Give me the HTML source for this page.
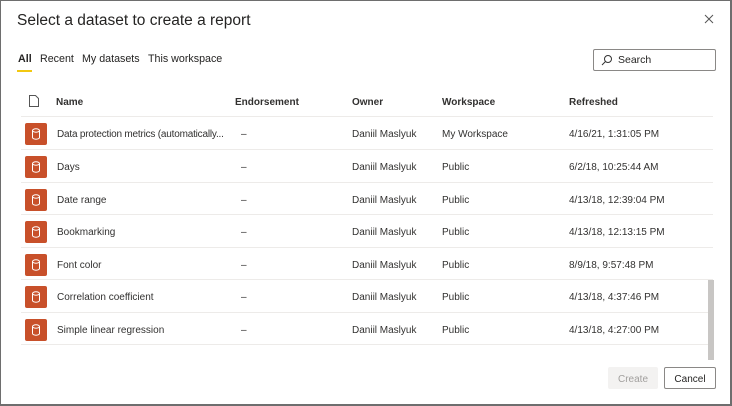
<!DOCTYPE html>
<html><head><style>
*{margin:0;padding:0;box-sizing:border-box}
body{width:732px;height:406px;background:#fff;font-family:"Liberation Sans",sans-serif;color:#252423;position:relative;overflow:hidden}
.frame{position:absolute;left:0;top:0;width:732px;height:406px;border:1px solid #6e6e6e;border-right-width:2px;border-bottom-width:2px}
.title{position:absolute;left:17px;top:12px;font-size:15.5px;color:#252423}
.close{position:absolute;left:704px;top:14px}
.tabs{position:absolute;top:53px;left:18px;font-size:10.7px;color:#252423}
.tabs span{position:absolute;white-space:nowrap}
.ul{position:absolute;left:17px;top:70px;width:15px;height:2px;background:#f2c811}
.search{position:absolute;left:593px;top:49px;width:123px;height:22px;border:1px solid #8a8886;border-radius:2px;font-size:10.5px}
.search span{position:absolute;left:24px;top:4px}
.hdr{position:absolute;top:97px;font-size:10px;font-weight:bold;color:#323130}
.row{position:absolute;left:21px;width:692px;height:33px;border-top:1px solid #edebe9;font-size:10px;color:#323130}
.row span{position:absolute;top:12px;white-space:nowrap}
.ic{position:absolute;left:4px;top:6px;width:22px;height:22px;background:#c8502a;border-radius:2px}
.ic svg{position:absolute;left:6px;top:5px}
.sb{position:absolute;left:708px;top:280px;width:6px;height:80px;background:#c8c6c4}
.btn{position:absolute;top:367px;height:22px;font-size:10px;text-align:center;border-radius:2px}
.btn span{position:absolute;left:0;right:0;top:7px}
</style></head><body>
<div class="frame"></div>
<div class="title">Select a dataset to create a report</div>
<svg class="close" width="10" height="10" viewBox="0 0 10 10"><path d="M1 1L9 9M9 1L1 9" stroke="#555" stroke-width="1"/></svg>
<div class="tabs"><span style="left:0;font-weight:bold">All</span><span style="left:22px">Recent</span><span style="left:64px">My datasets</span><span style="left:130px">This workspace</span></div>
<div class="ul"></div>
<div class="search"><svg style="position:absolute;left:7px;top:4px" width="12" height="12" viewBox="0 0 12 12"><circle cx="7" cy="5" r="3.5" fill="none" stroke="#333"/><path d="M4.5 7.5L1 11" stroke="#333"/></svg><span>Search</span></div>
<svg style="position:absolute;left:29px;top:95px" width="10" height="12" viewBox="0 0 10 12"><path d="M0.5 0.5H6.5L9.5 3.5V11.5H0.5Z" fill="none" stroke="#555"/></svg>
<div class="hdr" style="left:56px">Name</div>
<div class="hdr" style="left:235px">Endorsement</div>
<div class="hdr" style="left:352px">Owner</div>
<div class="hdr" style="left:442px">Workspace</div>
<div class="hdr" style="left:569px">Refreshed</div>
<div class="row" style="top:116px"><div class="ic"><svg width="10" height="12" viewBox="0 0 10 12"><ellipse cx="5" cy="2.5" rx="3.5" ry="1.7" fill="none" stroke="#fff"/><path d="M1.5 2.5V9.5A3.5 1.7 0 0 0 8.5 9.5V2.5" fill="none" stroke="#fff"/></svg></div><span style="left:36px;letter-spacing:-0.2px">Data protection metrics (automatically...</span><span style="left:220px">–</span><span style="left:331px">Daniil Maslyuk</span><span style="left:421px">My Workspace</span><span style="left:548px">4/16/21, 1:31:05 PM</span></div>
<div class="row" style="top:149px"><div class="ic"><svg width="10" height="12" viewBox="0 0 10 12"><ellipse cx="5" cy="2.5" rx="3.5" ry="1.7" fill="none" stroke="#fff"/><path d="M1.5 2.5V9.5A3.5 1.7 0 0 0 8.5 9.5V2.5" fill="none" stroke="#fff"/></svg></div><span style="left:36px">Days</span><span style="left:220px">–</span><span style="left:331px">Daniil Maslyuk</span><span style="left:421px">Public</span><span style="left:548px">6/2/18, 10:25:44 AM</span></div>
<div class="row" style="top:182px"><div class="ic"><svg width="10" height="12" viewBox="0 0 10 12"><ellipse cx="5" cy="2.5" rx="3.5" ry="1.7" fill="none" stroke="#fff"/><path d="M1.5 2.5V9.5A3.5 1.7 0 0 0 8.5 9.5V2.5" fill="none" stroke="#fff"/></svg></div><span style="left:36px">Date range</span><span style="left:220px">–</span><span style="left:331px">Daniil Maslyuk</span><span style="left:421px">Public</span><span style="left:548px">4/13/18, 12:39:04 PM</span></div>
<div class="row" style="top:214px"><div class="ic"><svg width="10" height="12" viewBox="0 0 10 12"><ellipse cx="5" cy="2.5" rx="3.5" ry="1.7" fill="none" stroke="#fff"/><path d="M1.5 2.5V9.5A3.5 1.7 0 0 0 8.5 9.5V2.5" fill="none" stroke="#fff"/></svg></div><span style="left:36px">Bookmarking</span><span style="left:220px">–</span><span style="left:331px">Daniil Maslyuk</span><span style="left:421px">Public</span><span style="left:548px">4/13/18, 12:13:15 PM</span></div>
<div class="row" style="top:247px"><div class="ic"><svg width="10" height="12" viewBox="0 0 10 12"><ellipse cx="5" cy="2.5" rx="3.5" ry="1.7" fill="none" stroke="#fff"/><path d="M1.5 2.5V9.5A3.5 1.7 0 0 0 8.5 9.5V2.5" fill="none" stroke="#fff"/></svg></div><span style="left:36px">Font color</span><span style="left:220px">–</span><span style="left:331px">Daniil Maslyuk</span><span style="left:421px">Public</span><span style="left:548px">8/9/18, 9:57:48 PM</span></div>
<div class="row" style="top:279px"><div class="ic"><svg width="10" height="12" viewBox="0 0 10 12"><ellipse cx="5" cy="2.5" rx="3.5" ry="1.7" fill="none" stroke="#fff"/><path d="M1.5 2.5V9.5A3.5 1.7 0 0 0 8.5 9.5V2.5" fill="none" stroke="#fff"/></svg></div><span style="left:36px">Correlation coefficient</span><span style="left:220px">–</span><span style="left:331px">Daniil Maslyuk</span><span style="left:421px">Public</span><span style="left:548px">4/13/18, 4:37:46 PM</span></div>
<div class="row" style="top:312px;border-bottom:1px solid #edebe9"><div class="ic"><svg width="10" height="12" viewBox="0 0 10 12"><ellipse cx="5" cy="2.5" rx="3.5" ry="1.7" fill="none" stroke="#fff"/><path d="M1.5 2.5V9.5A3.5 1.7 0 0 0 8.5 9.5V2.5" fill="none" stroke="#fff"/></svg></div><span style="left:36px">Simple linear regression</span><span style="left:220px">–</span><span style="left:331px">Daniil Maslyuk</span><span style="left:421px">Public</span><span style="left:548px">4/13/18, 4:27:00 PM</span></div>
<div class="sb"></div>
<div class="btn" style="left:608px;width:50px;background:#f3f2f1;color:#a19f9d"><span>Create</span></div>
<div class="btn" style="left:664px;width:52px;border:1px solid #8a8886;color:#252423"><span style="top:6px">Cancel</span></div>
</body></html>
